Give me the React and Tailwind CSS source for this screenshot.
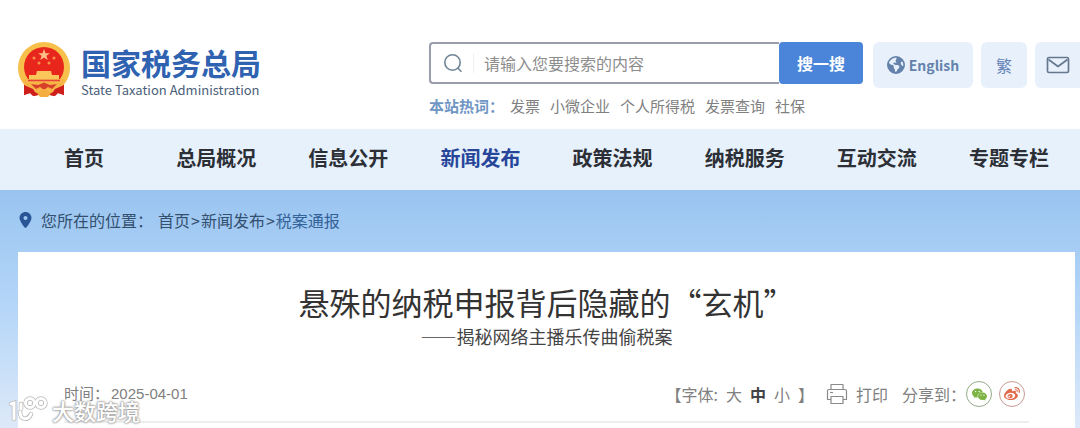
import { FaEarthAmericas, FaLocationDot, FaWeibo } from 'react-icons/fa6';
import { AiFillWechat } from 'react-icons/ai';

const hotWords = ['发票', '小微企业', '个人所得税', '发票查询', '社保'];

const navItems = ['首页', '总局概况', '信息公开', '新闻发布', '政策法规', '纳税服务', '互动交流', '专题专栏'];

function Emblem() {
  return (
    <svg viewBox="0 0 54 56" className="w-[54px] h-14 shrink-0" aria-hidden="true">
      <path d="M7 39 L7 53 L13 51 L17 54 L27 52 L37 54 L41 51 L47 53 L47 39Z" fill="#cf1f1c" />
      <circle cx="27" cy="26" r="26" fill="#f7c04a" />
      <circle cx="27" cy="25" r="20" fill="#e8261c" />
      <path d="M27 7l1.500 4.200h4.400l-3.500 2.600 1.300 4.200-3.700-2.600-3.700 2.600 1.300-4.200-3.500-2.600h4.400z" fill="#fbc08a" />
      <g fill="#f6904a">
        <circle cx="17" cy="16" r="1.500" />
        <circle cx="37" cy="16" r="1.500" />
        <circle cx="22" cy="21" r="1.500" />
        <circle cx="32" cy="21" r="1.500" />
      </g>
      <path d="M20 29h14l1 4h7v5H12v-5h7z" fill="#fbc65a" />
      <path d="M6 37h42c-2 7-7 11-13 13H19c-6-2-11-6-13-13z" fill="#f7b548" />
      <path d="M11 38.500h32" stroke="#e8453a" strokeWidth="1.500" />
      <path d="M14 42l7 1 6-2.500 6 2.500 7-1-5 5-4-2-4 3-4-3-4 2z" fill="#d9402a" />
      <path d="M7 43l9 4 4 6-4 1-3-3-6 2zM47 43l-9 4-4 6 4 1 3-3 6 2z" fill="#cf1f1c" />
      <path d="M20 51l7-4 7 4-3 4h-8z" fill="#f4ad3f" />
    </svg>
  );
}

function SearchIcon() {
  return (
    <svg viewBox="0 0 20 20" className="w-5 h-5 shrink-0" fill="none" stroke="#6f8499" strokeWidth="1.6" strokeLinecap="round">
      <circle cx="9.500" cy="9.500" r="7.700" />
      <path d="M15 15.200l3 3" />
    </svg>
  );
}

function MailIcon() {
  return (
    <svg viewBox="0 0 24 18" className="w-6 h-[18px]" fill="none" stroke="#66788f" strokeWidth="1.7" strokeLinejoin="round">
      <rect x="1.500" y="1.500" width="21" height="15" rx="1.500" />
      <path d="M2.500 3.500l9.500 7 9.500-7" />
    </svg>
  );
}

function PrinterIcon() {
  return (
    <svg viewBox="0 0 22 22" className="w-[22px] h-[22px]" fill="none" stroke="#8a8a8a" strokeWidth="1.2" strokeLinejoin="round">
      <path d="M5 6.500v-5h12v5" />
      <path d="M5 16.500H1.500V8q0-1.500 1.500-1.500h16q1.500 0 1.500 1.500v8.500H17" />
      <path d="M5 13.500h12v7H5z" />
      <path d="M4 9.500h3" />
    </svg>
  );
}

function Header() {
  return (
    <header className="flex items-start justify-between pl-[17px] pt-[42px] h-[129px]">
      <a href="#" className="flex items-center gap-[10px]">
        <Emblem />
        <div className="text-[#2f62b0]">
          <div className="text-[30px] leading-10 font-bold">国家税务总局</div>
          <div className="text-[13px] leading-4 text-[#4a6078]">State Taxation Administration</div>
        </div>
      </a>

      <div className="flex items-start gap-[10px]">
        <div>
          <form className="flex w-[434px] h-[42px]" onSubmit={(e) => e.preventDefault()}>
            <label className="flex flex-1 items-center pl-3 border-2 border-r-0 border-[#9a9eab] rounded-l-[4px]">
              <SearchIcon />
              <span className="w-px h-5 ml-2.5 mr-2.5 bg-[#eef1f4]" />
              <input
                type="text"
                aria-label="搜索"
                placeholder="请输入您要搜索的内容"
                className="flex-1 min-w-0 text-base outline-none placeholder:text-[#8d8d8d]"
              />
            </label>
            <button type="submit" className="w-[84px] rounded-[4px] bg-[#4a85da] text-white text-base font-bold">
              搜一搜
            </button>
          </form>
          <div className="flex items-center gap-[10px] mt-[10px] text-[15px] leading-6 text-[#808080]">
            <span className="text-[#7096c4] font-bold -mr-1">本站热词：</span>
            {hotWords.map((word) => (
              <a key={word} href="#">{word}</a>
            ))}
          </div>
        </div>

        <div className="flex gap-2">
          <button className="flex items-center justify-center gap-1 w-[100px] h-[46px] rounded-md bg-[#e8f1fb] text-[#6482ab] text-sm font-bold">
            <FaEarthAmericas className="w-[18px] h-[18px]" />
            English
          </button>
          <button className="w-[46px] h-[46px] rounded-md bg-[#e8f1fb] text-[#6482b8] text-base">繁</button>
          <button aria-label="邮箱" className="flex items-center justify-center w-[45px] h-[46px] rounded-l-md bg-[#e8f1fb]">
            <MailIcon />
          </button>
        </div>
      </div>
    </header>
  );
}

function NavBar() {
  return (
    <nav className="bg-[#e6f1fc]">
      <ul className="grid grid-cols-8 pl-[18px] pr-[5px]">
        {navItems.map((item) => (
          <li key={item} className="text-center">
            <a
              href="#"
              className={`block pb-1 text-xl leading-[57px] font-bold ${item === '新闻发布' ? 'text-[#27469a]' : 'text-[#2c2f36]'}`}
            >
              {item}
            </a>
          </li>
        ))}
      </ul>
    </nav>
  );
}

function Breadcrumb() {
  return (
    <div className="flex items-center gap-px h-[62px] pb-0.5 pl-[18px] text-base text-[#34506f]">
      <FaLocationDot className="w-[15px] h-4 mr-[7px] text-[#2a5596]" />
      <span className="mr-1">您所在的位置：</span>
      <a href="#">首页</a>&gt;
      <a href="#">新闻发布</a>&gt;
      <a href="#" className="text-[#336299]">税案通报</a>
    </div>
  );
}

function Article() {
  return (
    <main className="ml-[18px] mr-[5px] bg-white px-[46px] pt-[30px] min-h-44">
      <h1 className="text-center text-[31px] leading-10 text-[#333]">悬殊的纳税申报背后隐藏的“玄机”</h1>
      <p className="text-center text-lg leading-7 text-[#444]">——揭秘网络主播乐传曲偷税案</p>

      <div className="flex items-center justify-between mt-[30px] pr-1 pb-[13px] border-b-2 border-[#eee] text-[#808080]">
        <div className="flex items-center gap-0.5 text-[15px] font-['Liberation_Sans','Noto_Sans_CJK_SC',sans-serif]">
          <span>时间：</span>
          <time>2025-04-01</time>
        </div>
        <div className="flex items-center text-base leading-7">
          <div className="flex items-center gap-2">
            <span>【字体:</span>
            <button>大</button>
            <button className="font-bold text-[#444]">中</button>
            <button>小</button>
            <span>】</span>
          </div>
          <button className="flex items-center gap-2 ml-3">
            <PrinterIcon />
            打印
          </button>
          <span className="ml-3.5">分享到：</span>
          <a href="#" aria-label="微信" className="flex items-center justify-center w-[26px] h-[26px] rounded-full border border-[#93aa8c]">
            <AiFillWechat className="w-[17px] h-[17px] text-[#7cb342]" />
          </a>
          <a href="#" aria-label="微博" className="flex items-center justify-center w-[26px] h-[26px] ml-[7px] rounded-full border border-[#c69a93]">
            <FaWeibo className="w-4 h-4 text-[#e2694a]" />
          </a>
        </div>
      </div>
    </main>
  );
}

function Watermark() {
  return (
    <div className="absolute left-2 bottom-1 flex items-center gap-1 pointer-events-none">
      <svg viewBox="0 0 40 28" className="w-10 h-7" fill="none" strokeLinecap="round">
        <g stroke="#b8b8b8" strokeWidth="4.500">
          <path d="M3 8l3-1v16M13 8v5M12 16c0 8 8 9 11 2" />
          <circle cx="22" cy="7" r="4.500" />
          <circle cx="33" cy="7" r="4.500" />
        </g>
        <g stroke="#fff" strokeWidth="3">
          <path d="M3 8l3-1v16M13 8v5M12 16c0 8 8 9 11 2" />
          <circle cx="22" cy="7" r="4.500" />
          <circle cx="33" cy="7" r="4.500" />
        </g>
      </svg>
      <span className="text-[22px] leading-7 font-medium text-white [text-shadow:0_0_2px_#999,0_0_2px_#999,0_0_3px_#aaa]">大数跨境</span>
    </div>
  );
}

export default function App() {
  return (
    <div className="relative overflow-hidden bg-white font-['Noto_Sans_CJK_SC',sans-serif]" lang="zh-CN">
      <Header />
      <NavBar />
      <div className="bg-linear-to-b from-[#99c4f0] via-[#b5d6f8] to-[#dde9f9]">
        <Breadcrumb />
        <Article />
      </div>
      <Watermark />
    </div>
  );
}
